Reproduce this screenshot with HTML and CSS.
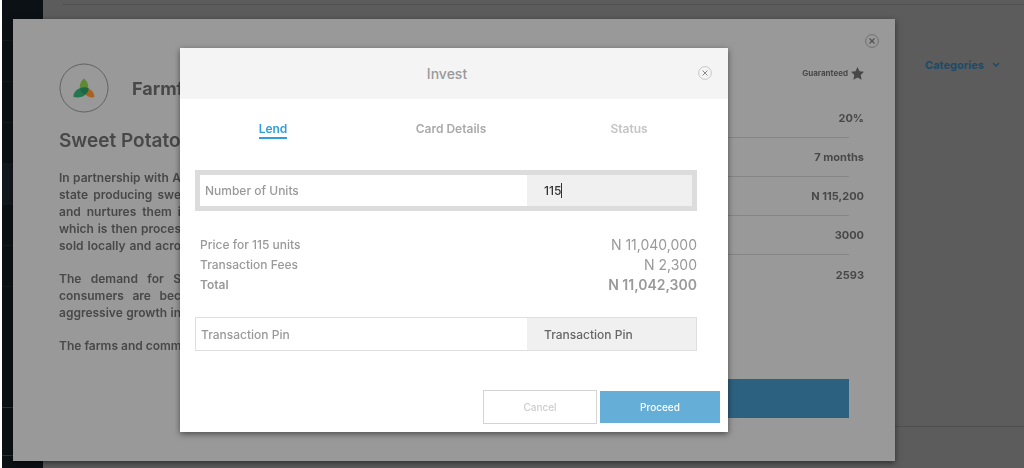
FILE: index.html
```
<!DOCTYPE html>
<html lang="en">

<head>
    <meta charset="utf-8">
    <title>Invest</title>
    <link rel="stylesheet" href="styles.css">
</head>

<body>
    <aside class="sidebar">
        <div class="item"></div>
        <div class="item"></div>
        <div class="item"></div>
        <div class="item"></div>
        <div class="item"></div>
        <div class="item active"></div>
        <div class="item"></div>
        <div class="item"></div>
        <div class="spacer"></div>
        <div class="account"></div>
    </aside>
    <main class="page">
        <div class="top-line"></div>
        <div class="filters">
            <button type="button" class="categories">Categories
                <svg width="8" height="6" viewBox="0 0 8 6"><path d="M1 1l3 3 3-3" fill="none" stroke="currentColor" stroke-width="1.5"/></svg>
            </button>
        </div>
        <div class="bottom-line"></div>
    </main>

    <div class="overlay">
        <section class="details">
            <button type="button" class="close" aria-label="Close details">
                <svg width="14" height="14" viewBox="0 0 14 14" fill="none" stroke="currentColor"><circle class="ring" cx="7" cy="7" r="6.4"/><path d="M4.5 4.5l5 5m0-5l-5 5" stroke-width="1.3"/></svg>
            </button>
            <div class="about">
                <div class="company">
                    <svg class="logo" width="50" height="50" viewBox="0 0 50 50">
                        <circle cx="25" cy="25" r="24" fill="none" stroke="#626262"/>
                        <path d="M25 15.500C29.500 19 30.500 25 27.500 31H22.500C19.500 25 20.500 19 25 15.500Z" fill="#5f8a34"/>
                        <path d="M28 25C32 26 35 29 35.500 34C31 35.500 27 33 25 29Z" fill="#a96220"/>
                        <path d="M29.500 25.500C30 31 23 36 14.500 34C14 29 20 22 29.500 25.500Z" fill="#23764f"/>
                        <path d="M21 26Q25 23 29.500 25.500Q29 29 26 31Q22 30 21 26Z" fill="#1d6545"/>
                    </svg>
                    <h2>Farmf</h2>
                </div>
                <h1>Sweet Potato</h1>
                <p>In partnership with A<br>state producing swe<br>and nurtures them i<br>which is then proces<br>sold locally and acro</p>
                <p>The demand for S<br>consumers are bec<br>aggressive growth in</p>
                <p>The farms and comm</p>
            </div>
            <div class="summary">
                <div class="guaranteed">Guaranteed
                    <svg width="13" height="13" viewBox="0 0 13 13"><path d="M6.500 0l2 4.200 4.500.6-3.300 3.200.9 4.800-4.100-2.300-4.100 2.300.9-4.800L0 4.800l4.500-.6z" fill="currentColor"/></svg>
                </div>
                <ul>
                    <li><span>20%</span></li>
                    <li><span>7 months</span></li>
                    <li><span>N 115,200</span></li>
                    <li><span>3000</span></li>
                    <li><span>2593</span></li>
                </ul>
                <button type="button" class="invest" aria-label="Invest"></button>
            </div>
        </section>
    </div>

    <div class="overlay">
        <form class="modal">
            <header>
                <h3>Invest</h3>
                <button type="button" class="close" aria-label="Close">
                    <svg width="14" height="14" viewBox="0 0 14 14" fill="none" stroke="currentColor"><circle class="ring" cx="7" cy="7" r="6.4"/><path d="M4.500 4.500l5 5m0-5l-5 5"/></svg>
                </button>
            </header>
            <nav class="tabs">
                <a href="#lend" class="current">Lend</a>
                <a href="#card">Card Details</a>
                <a href="#status" class="disabled">Status</a>
            </nav>
            <div class="content">
                <div class="field focused">
                    <label for="units">Number of Units</label>
                    <div class="value">
                        <input type="text" id="units" class="units" value="115" size="3">
                        <span class="caret"></span>
                    </div>
                </div>
                <table>
                    <tr>
                        <th>Price for 115 units</th>
                        <td>N 11,040,000</td>
                    </tr>
                    <tr>
                        <th>Transaction Fees</th>
                        <td>N 2,300</td>
                    </tr>
                    <tr class="total">
                        <th>Total</th>
                        <td>N 11,042,300</td>
                    </tr>
                </table>
                <div class="field">
                    <label for="pin">Transaction Pin</label>
                    <div class="value">
                        <input type="text" id="pin" placeholder="Transaction Pin">
                    </div>
                </div>
            </div>
            <div class="buttons">
                <button type="button" class="cancel">Cancel</button>
                <button type="submit" class="proceed">Proceed</button>
            </div>
        </form>
    </div>
</body>

</html>
```

FILE: styles.css
```
* {
    margin: 0;
    padding: 0;
    box-sizing: border-box;
}

body {
    display: flex;
    min-height: 100vh;
    padding-left: 2px;
    background: #ffffff;
    color: #484848;
    font-family: Inter, "Liberation Sans", sans-serif;
    font-size: 12px;
}

button {
    border: none;
    background: none;
    font: inherit;
    color: inherit;
}

svg {
    display: block;
    flex-shrink: 0;
}

.sidebar {
    display: flex;
    flex-direction: column;
    width: 41px;
    background: #0c1116;
}

.item {
    height: 41px;
    border-bottom: 1px solid #12191f;
}

.item.active {
    background: #12181d;
}

.item:first-child {
    height: 0;
    border: none;
}

.spacer {
    flex: 1;
}

.account {
    height: 49px;
    margin-bottom: 12px;
    border-top: 1px solid #2c3236;
    border-bottom: 1px solid #2c3236;
}

.page {
    flex: 1;
    display: flex;
    flex-direction: column;
    background: #5c5c5c;
}

.top-line {
    height: 5px;
    margin-left: 20px;
    border-bottom: 1px solid #505050;
}

.filters {
    display: flex;
    flex: 1;
    align-items: flex-start;
    justify-content: flex-end;
    padding: 53px 24px 0;
}

.categories {
    display: flex;
    align-items: center;
    gap: 8px;
    color: #1d4b67;
    font-size: 11px;
    font-weight: 700;
}

.bottom-line {
    height: 42px;
    border-top: 1px solid #4f4f4f;
}

.overlay {
    position: fixed;
    inset: 0 116px 0 0;
    display: flex;
    align-items: flex-start;
    justify-content: center;
}

.details {
    position: relative;
    display: flex;
    justify-content: space-between;
    flex: 1;
    min-height: 442px;
    margin: 19px 13px 0;
    padding: 44px 46px 43px;
    background: #999999;
    box-shadow: 0 2px 6px rgba(0, 0, 0, 0.5);
}

.close {
    position: absolute;
    color: #555555;
}

.details .close {
    top: 15px;
    right: 16px;
}

.ring {
    stroke: #707070;
}

.company {
    display: flex;
    align-items: center;
    gap: 23px;
}

.about {
    width: 122px;
    white-space: nowrap;
}

.about h2 {
    font-size: 18px;
    font-weight: 700;
}

.about h1 {
    margin: 16px 0;
    font-size: 19px;
    line-height: 24px;
    font-weight: 600;
}

.about p {
    margin-bottom: 16px;
    font-size: 12px;
    font-weight: 600;
    line-height: 17px;
    text-align: justify;
    text-align-last: justify;
}

.summary {
    display: flex;
    flex-direction: column;
    width: 240px;
    font-weight: 700;
}

.guaranteed {
    display: flex;
    align-items: center;
    justify-content: flex-end;
    gap: 3px;
    height: 20px;
    margin-right: -15px;
    font-size: 8px;
}

.summary ul {
    margin-top: 16px;
    list-style: none;
    font-size: 11px;
}

.summary li {
    display: flex;
    align-items: center;
    justify-content: flex-end;
    height: 39px;
    border-bottom: 1px solid #858585;
}

.summary li:last-child {
    border: none;
}

.summary li span {
    margin-right: -15px;
}

.invest {
    height: 39px;
    margin-top: auto;
    background: #2d6180;
}

.modal {
    width: 548px;
    margin-top: 48px;
    background: #ffffff;
    box-shadow: 0 2px 6px rgba(0, 0, 0, 0.5);
    color: #999999;
}

.modal header {
    position: relative;
    display: flex;
    align-items: center;
    justify-content: center;
    height: 51px;
    padding-right: 14px;
    background: #f4f4f4;
}

.modal h3 {
    font-size: 14px;
    font-weight: 500;
}

.modal .close {
    top: 18px;
    right: 16px;
    color: #888888;
}

.modal .ring {
    stroke: #c8c8c8;
}

.tabs {
    display: grid;
    grid-template-columns: 1fr 1fr 1fr;
    justify-items: center;
    padding: 21px 10px 0 4px;
}

.tabs a {
    border-bottom: 2px solid transparent;
    color: #aaaaaa;
    font-weight: 600;
    line-height: 17px;
    text-decoration: none;
}

.tabs .current {
    border-color: #2f9fdc;
    color: #2f9fdc;
}

.tabs .disabled {
    color: #c4c4c4;
}

.content {
    padding: 31px 31px 0 15px;
}

.field {
    display: flex;
    height: 34px;
    border: 1px solid #dedede;
}

.field.focused {
    height: 41px;
    border: 5px solid #dcdcdc;
}

.field label {
    flex: 1;
    display: flex;
    align-items: center;
    padding-left: 5px;
    font-size: 12px;
    font-weight: 500;
}

.value {
    display: flex;
    align-items: center;
    width: 169px;
    padding-left: 17px;
    background: #f0f0f0;
}

.focused .value {
    width: 165px;
}

.value input {
    width: 100%;
    border: none;
    outline: none;
    background: none;
    color: #333333;
    font-family: inherit;
    font-size: 12px;
    font-weight: 500;
}

.value .units {
    width: auto;
    field-sizing: content;
}

.value input::placeholder {
    color: #666666;
}

.caret {
    width: 1px;
    height: 15px;
    background: #333333;
}

.modal table {
    width: 100%;
    margin: 23px 0;
    border-collapse: collapse;
}

.modal th,
.modal td {
    height: 20px;
    font-weight: 400;
}

.modal th {
    padding-left: 5px;
    font-size: 12px;
    font-weight: 500;
    text-align: left;
}

.modal td {
    font-size: 14px;
    text-align: right;
}

.modal .total th,
.modal .total td {
    font-weight: 600;
}

.buttons {
    display: flex;
    align-items: center;
    justify-content: flex-end;
    gap: 3px;
    padding: 39px 8px 8px;
}

.buttons button {
    font-size: 10px;
    font-weight: 500;
}

.cancel {
    width: 114px;
    height: 34px;
    border: 1px solid #d4d4d4;
    color: #cccccc;
}

.proceed {
    width: 120px;
    height: 32px;
    background: #65aed7;
    color: #ffffff;
}
```
